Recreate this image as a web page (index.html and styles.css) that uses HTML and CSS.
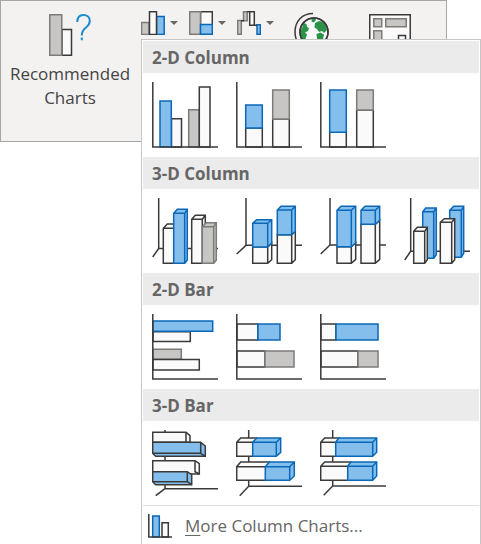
FILE: index.html
```html
<!DOCTYPE html>
<html lang="en">
<head>
<meta charset="utf-8">
<title>Insert chart</title>
<link rel="stylesheet" href="styles.css">
</head>
<body>
<main class="app">
  <div class="ribbon">
    <button class="recommended" type="button">
      <svg class="rec-icon" viewBox="0 0 42 42" aria-hidden="true">
        <path class="white" d="M13 15.500h9.500v25.700H13z"/>
        <path class="gray" d="M.75.75h12v40.500h-12z"/>
        <path class="question" d="M28.300 8C28.300 3.500 30.500 1 34.300 1s6.500 2.300 6.500 6c0 3-1.500 4.700-3.800 6.500-3 2.300-4.200 4-4.200 8M32.800 23.500v2.800"/>
      </svg>
      <span>Recommended<br>Charts</span>
    </button>
    <div class="tools">
      <button class="tool" type="button" aria-label="Insert column or bar chart" aria-expanded="true">
        <svg class="tool-icon" viewBox="0 0 24 24" aria-hidden="true">
          <path class="gray" d="M.5 11.500h7.500v12H.5z"/><path class="blue" d="M15.500 5.500h7.700v18h-7.700z"/><path class="white" d="M8.500.7h7v22.800h-7z"/>
        </svg>
        <span class="caret"></span>
      </button>
      <button class="tool" type="button" aria-label="Insert hierarchy chart">
        <svg class="tool-icon" viewBox="0 0 24 24" aria-hidden="true">
          <path class="white" d="M11.500.7h11.800v13H11.500z"/><path class="gray" d="M.7.7h10.800v22.600H.7z"/><path class="blue" d="M11.500 13.500h11.800v9.800H11.500z"/>
        </svg>
        <span class="caret"></span>
      </button>
      <button class="tool" type="button" aria-label="Insert waterfall chart">
        <svg class="tool-icon" viewBox="0 0 24 24" aria-hidden="true">
          <path class="gray" d="M.7 9.500h3.600v13.800H.7zM6.500.7h3.700v9H6.500z"/><path class="line" d="M10 .7h8"/><path class="white" d="M12.700.7h4.600v13.600h-4.600z"/><path class="blue" d="M20 13.700h3.400v9.600H20z"/><path class="line" d="M16.500 14.200H20M4 9.700h3"/>
        </svg>
        <span class="caret"></span>
      </button>
    </div>
    <button class="large" type="button" aria-label="Maps">
      <svg class="large-icon" viewBox="0 0 42 42" aria-hidden="true">
        <circle class="white" cx="20" cy="18" r="14"/>
        <path class="land" d="M6.500 17l2-4 1-4 3 1 .5 3 2 1-1 3-3 1.500 2 2-1.500 4.500-3 2-2-5zM17.500 4.500l4.500.3-.5 2-2 1.700-2-1zM21 9l4-2 4 1 3 4 1 4-3 3-2-2-3 1-2-3-2.500-1.500zM22.500 20l4-1.500 3.500 2-1 5-4 3-2-4z"/>
        <circle class="line" cx="20" cy="18" r="14"/>
        <path class="line" d="M19-.5C8-.5 1 7.500 1 18c0 6 2 11 6 15"/>
      </svg>
    </button>
    <button class="large" type="button" aria-label="PivotChart">
      <svg class="large-icon" viewBox="0 0 42 42" aria-hidden="true">
        <path class="white" d="M.75.75h40.500v40.500H.75z"/>
        <path class="gray" d="M4.750 4.750h8v8h-8zM16.750 4.750h20.500v8H16.750zM4.750 16.750h8v20h-8z"/>
        <path class="white" d="M29.500 21.500h7v16h-7z"/>
      </svg>
    </button>
  </div>

  <div class="menu">
    <section>
      <h2>2-D Column</h2>
      <div class="gallery">
        <button type="button" aria-label="Clustered column"><svg viewBox="0 0 66 66">
          <path class="white" d="M19.500 36.700h10V65h-10z"/><path class="blue" d="M8 19h11.300v46H8z"/>
          <path class="gray" d="M36.700 27.700h10.500V65H36.700z"/><path class="white" d="M47.300 5H58v60H47.300z"/>
          <path class="line" d="M.8 0v65H66"/></svg></button>
        <button type="button" aria-label="Stacked column"><svg viewBox="0 0 66 66">
          <path class="white" d="M9.700 46h16.600v19H9.700zM36.700 37h16.600v28H36.700z"/>
          <path class="blue" d="M9.700 23h16.600v23H9.700z"/><path class="gray" d="M36.700 8h16.600v29H36.700z"/>
          <path class="line" d="M.8 0v65H66"/></svg></button>
        <button type="button" aria-label="100% stacked column"><svg viewBox="0 0 66 66">
          <path class="white" d="M9.700 50h16.600v15H9.700zM36.700 28h16.600v37H36.700z"/>
          <path class="blue" d="M9.700 8h16.600v42.300H9.700z"/><path class="gray" d="M36.700 8h16.600v20H36.700z"/>
          <path class="line" d="M.8 0v65H66"/></svg></button>
      </div>
    </section>
    <section>
      <h2>3-D Column</h2>
      <div class="gallery">
        <button type="button" aria-label="3-D clustered column"><svg viewBox="0 0 66 66">
          <path class="line" d="M6.700 0v50.500L.7 59M6.700 50.500H66"/>
          <path class="white" d="M11.300 65.300v-35l4-4.300h9v39.300zM11.300 30.300h10.400"/>
          <path class="blue" d="M21.700 65.300v-50l3.600-4h10V62l-2.600 3.300zM21.700 15.300h11v50M32.700 15.300l2.600-4"/>
          <path class="white" d="M39.700 65.300v-44l3.600-4h10v48zM39.700 21.300h10.600v44M50.300 21.300l3-4"/>
          <path class="gray" d="M50.300 65.300V28.700l4-4h10v37.600l-2.600 3zM50.300 28.700h11.400v36.600M61.700 28.700l2.600-4"/></svg></button>
        <button type="button" aria-label="3-D stacked column"><svg viewBox="0 0 66 66">
          <path class="line" d="M10 0v47.300L.7 56M10 47.300h56"/>
          <path class="white" d="M16.700 49h15l4-4v16.700l-4 3.600h-15zM31.700 49v16.300M41.300 36.700h14.400l3.600-3.500v28.500l-3.600 3.600H41.300zM55.700 36.700v28.600"/>
          <path class="blue" d="M16.700 49V25.300l4-3.600h15V45l-4 4zM16.700 25.300h15V49M31.700 25.300l4-3.600M41.300 36.700V12l3.700-3.700h14.300v24.900l-3.600 3.500zM41.300 12h14.400v24.700M55.700 12l3.600-3.700"/></svg></button>
        <button type="button" aria-label="3-D 100% stacked column"><svg viewBox="0 0 66 66">
          <path class="line" d="M10 0v47L.7 56M10 47h56"/>
          <path class="white" d="M17 48.700h14.300l4.400-4v16.600l-4.400 4H17zM31.300 48.700v16.600M41 26.300h14.300l4.400-4v39l-4.400 4H41zM55.300 26.300v39"/>
          <path class="blue" d="M17 48.700V12.300l4-4h14.700v36.400l-4.400 4zM17 12.300h14.300v36.400M31.300 12.300l4.400-4M41 26.300v-14l4-4h14.700v14l-4.400 4zM41 12.300h14.300v14M55.300 12.300l4.400-4"/></svg></button>
        <button type="button" aria-label="3-D column"><svg viewBox="0 0 66 66">
          <path class="line" d="M6.700 0v53.300l-6 8.700M6.700 53.300H66"/>
          <path class="blue" d="M18.700 60.300V13.700l3-3.700h10.600v46.700l-2.600 3.600zM18.700 13.700h11v46.600M29.700 13.700l2.600-3.700M45.700 59.300v-47l4-4h10v47l-2.400 4zM45.700 12.300h11.600v47M57.300 12.300l2.400-4"/>
          <path class="white" d="M9.700 65.300v-32l3.600-4h10v32.400l-2.600 3.600zM9.700 33.300h11v32M20.700 33.300l2.600-4M36.300 65.300v-41l4-3.600h10.400v41l-3 3.600zM36.300 24.300h11.400v41M47.700 24.300l3-3.600"/></svg></button>
      </div>
    </section>
    <section>
      <h2>2-D Bar</h2>
      <div class="gallery">
        <button type="button" aria-label="Clustered bar"><svg viewBox="0 0 66 66">
          <path class="white" d="M1 17.700h37.300v9.800H1z"/><path class="blue" d="M1 7h59.700v10.300H1z"/>
          <path class="gray" d="M1 35.300h28.300v10H1z"/><path class="white" d="M1 45.500h46.300V56H1z"/>
          <path class="line" d="M.8 0v65H66"/></svg></button>
        <button type="button" aria-label="Stacked bar"><svg viewBox="0 0 66 66">
          <path class="white" d="M1 10h21v16H1zM1 37h28v16H1z"/><path class="blue" d="M22 10h22v16H22z"/><path class="gray" d="M29 37h29v16H29z"/>
          <path class="line" d="M.8 0v65H66"/></svg></button>
        <button type="button" aria-label="100% stacked bar"><svg viewBox="0 0 66 66">
          <path class="white" d="M1 10h15v16H1zM1 37h37v16H1z"/><path class="blue" d="M16 10h42v16H16z"/><path class="gray" d="M38 37h20v16H38z"/>
          <path class="line" d="M.8 0v65H66"/></svg></button>
      </div>
    </section>
    <section>
      <h2>3-D Bar</h2>
      <div class="gallery">
        <button type="button" aria-label="3-D clustered bar"><svg viewBox="0 0 66 66">
          <path class="line" d="M13 0v58.700l-9.300 7M13 58.700h53"/>
          <path class="white" d="M.7 2.300H34l4 3.400v6.600H.7zM34 2.300v10"/>
          <path class="blue dark" d="M.7 12.300h48l4.600 3.700v10.300H3.700l-3-3z"/>
          <path class="line" d="M.7 23.300h48v-11M48.700 23.300l4.600 3"/>
          <path class="white" d="M.7 30.700H43l4.300 3V44H38L.7 41.700z"/>
          <path class="line" d="M43 30.700v11l4.300 2.300"/>
          <path class="blue dark" d="M.7 41.700h34.600l4.400 3v10h-36l-3-3z"/>
          <path class="line" d="M.7 51.700h34.600v-10M35.300 51.700l4.400 3"/></svg></button>
        <button type="button" aria-label="3-D stacked bar"><svg viewBox="0 0 66 66">
          <path class="line" d="M12.700 0v56.300l-9 9.400M12.700 56.300H66"/>
          <path class="white" d="M.7 26.300v-14l4-4.300h16v18.300zM.7 12.300h16M.7 50.300V36.700l4-4.700h28.600v18.300zM.7 36.700h28.600"/>
          <path class="blue" d="M16.700 26.300v-14l4-4.300h24v14.300l-4.400 4zM16.700 12.300h23.600v14M40.300 12.300l4.400-4.300M29.300 50.300V36.700l4-4.700h25v14l-4.600 4.300zM29.300 36.700h24.400v13.600M53.700 36.700l4.600-4.700"/></svg></button>
        <button type="button" aria-label="3-D 100% stacked bar"><svg viewBox="0 0 66 66">
          <path class="line" d="M12.700 0v56l-9 9.300M12.700 56H66"/>
          <path class="white" d="M.7 26.300v-14l4-4.300h15v18.300zM.7 12.300h15M.7 50.300v-14l4-4.300h26v18.300zM.7 36.300h27"/>
          <path class="blue" d="M15.700 26.300v-14l3-4.300h38v14.300l-4 4zM15.700 12.300h37v14M52.700 12.300l4-4.300M27.700 50.300v-14l3-4.300h26v14l-4 4.300zM27.700 36.300h25v14M52.700 36.300l4-4.300"/></svg></button>
      </div>
    </section>
    <button class="more" type="button">
      <svg class="more-icon" viewBox="0 0 24 24" aria-hidden="true">
        <path class="blue" d="M4.700 2h6.600v21H4.700z"/><path class="white" d="M14 8.700h6.300V23H14z"/><path class="line" d="M.8 0v23H24"/>
      </svg>
      <span><u>M</u>ore Column Charts...</span>
    </button>
  </div>
</main>
</body>
</html>
```

FILE: styles.css
```css
* { box-sizing: border-box; }

body {
  margin: 0;
  background: #fff;
  color: #444;
  font-family: "Open Sans", "Noto Sans", sans-serif;
}

button {
  margin: 0;
  padding: 0;
  border: 0;
  background: none;
  color: inherit;
  font: inherit;
}

svg { display: block; fill: none; stroke-width: 1.5; }

.line { fill: none; stroke: #3b3a39; }
.white { fill: #fafafa; stroke: #3b3a39; }
.gray { fill: #c8c6c4; stroke: #7d7b78; }
.blue { fill: #83beec; stroke: #0b68b8; }
.blue.dark { stroke: #3b3a39; }
.land { fill: #2b9348; }
.question { stroke: #1e8bcd; stroke-width: 2; }

.app { position: relative; min-height: 100vh; }

.ribbon {
  display: flex;
  align-items: flex-start;
  margin-right: 34px;
  padding-bottom: 31px;
  border: 1px solid #a6a6a6;
  background: #f3f2f1;
}

.recommended {
  flex: none;
  width: 138px;
  margin-right: 2px;
  padding-top: 13px;
  font-size: 17px;
  line-height: 24px;
}

.rec-icon { width: 42px; height: 42px; margin: 0 0 6px 48px; }

.tools { display: flex; padding-top: 10px; }

.tool {
  display: flex;
  align-items: center;
  gap: 5px;
  width: 48px;
}

.tool-icon { width: 24px; height: 24px; }

.caret {
  border: 4px solid transparent;
  border-top-color: #666;
  border-bottom: 0;
}

.large { padding: 13px 0 0 9px; }
.large + .large { padding-left: 33px; }
.large-icon { width: 42px; height: 42px; overflow: visible; }

.menu {
  position: absolute;
  top: 39px;
  left: 141px;
  padding: 1px 1px 0;
  border: 1px solid #c6c6c6;
  border-bottom: 0;
  background: #fff;
}

h2 {
  margin: 0;
  padding: 2px 0 0 9px;
  background: #ebebeb;
  color: #666;
  font-size: 17px;
  font-weight: 700;
  line-height: 30px;
}

.gallery { display: grid; grid-template-columns: repeat(4, 84px); }
.gallery button { padding: 9px; }
.gallery svg { width: 66px; height: 66px; }

.more {
  display: flex;
  align-items: center;
  gap: 13px;
  width: 100%;
  padding: 7px 5px 5px;
  border-top: 1px solid #e1e1e1;
  color: #666;
  font-size: 17px;
  line-height: 26px;
}

.more-icon { width: 24px; height: 24px; }
.more u { text-decoration-thickness: 1px; text-underline-offset: 3px; }
```
